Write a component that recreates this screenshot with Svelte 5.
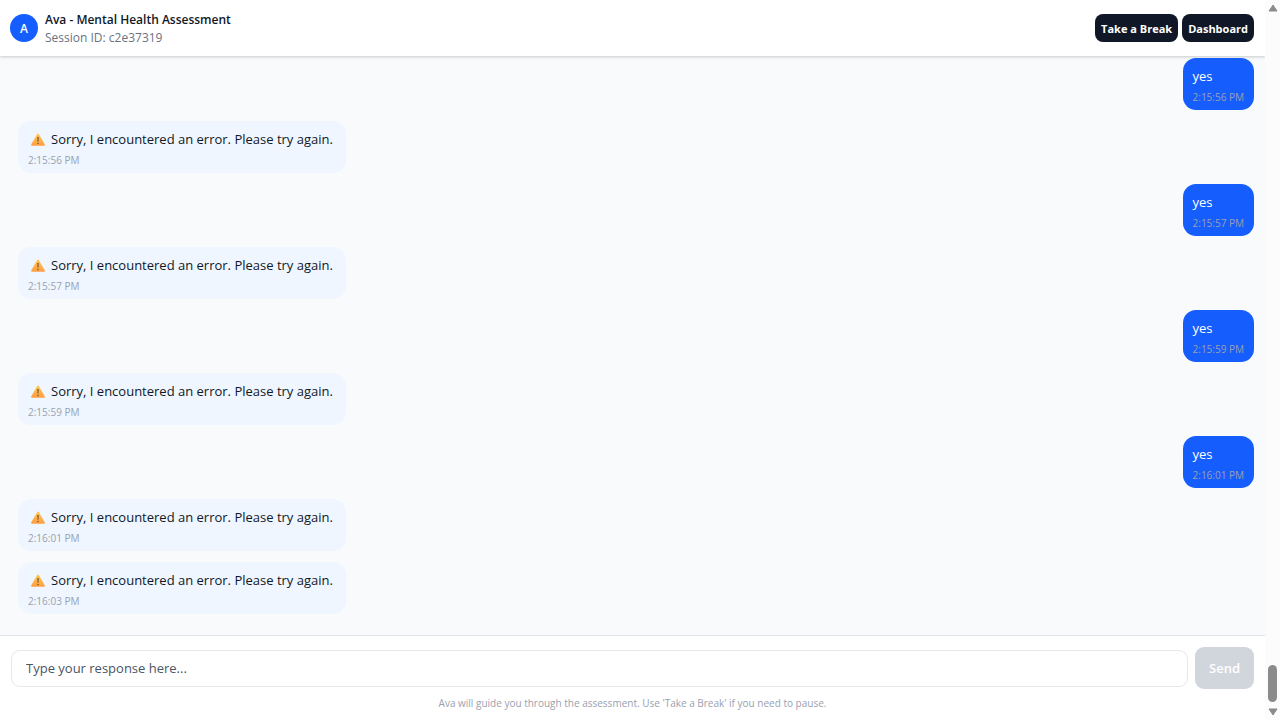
<script>
  const errorText = 'Sorry, I encountered an error. Please try again.';
  const messages = [
    { from: 'user', text: 'yes', time: '2:15:56 PM' },
    { from: 'ava', text: errorText, time: '2:15:56 PM' },
    { from: 'user', text: 'yes', time: '2:15:57 PM' },
    { from: 'ava', text: errorText, time: '2:15:57 PM' },
    { from: 'user', text: 'yes', time: '2:15:59 PM' },
    { from: 'ava', text: errorText, time: '2:15:59 PM' },
    { from: 'user', text: 'yes', time: '2:16:01 PM' },
    { from: 'ava', text: errorText, time: '2:16:01 PM' },
    { from: 'ava', text: errorText, time: '2:16:03 PM' }
  ];
  let draft = $state('');
</script>

<div class="window">
  <div class="page">
    <header>
      <div class="avatar">A</div>
      <div class="title">
        <h1>Ava - Mental Health Assessment</h1>
        <p>Session ID: c2e37319</p>
      </div>
      <div class="actions">
        <button type="button">Take a Break</button>
        <button type="button">Dashboard</button>
      </div>
    </header>

    <main>
      {#each messages as message}
        <div class="bubble {message.from}">
          <p class="text">
            {#if message.from === 'ava'}
              <svg class="warning" viewBox="0 0 14 13" aria-hidden="true">
                <defs>
                  <linearGradient id="amber" x1="0" y1="0" x2="0" y2="1">
                    <stop offset="0" stop-color="#ffc94f" />
                    <stop offset="1" stop-color="#ff9d42" />
                  </linearGradient>
                </defs>
                <path d="M6.2 .9Q7 0 7.8 .9L13.7 11.2Q14.2 12.7 12.8 12.8H1.2Q-.2 12.7 .3 11.2Z" fill="url(#amber)" />
                <path d="M6.4 4H7.6L7.4 8.8H6.6Z" fill="#5a4636" />
                <circle cx="7" cy="10.5" r=".7" fill="#5a4636" />
              </svg>
            {/if}
            <span>{message.text}</span>
          </p>
          <time>{message.time}</time>
        </div>
      {/each}
    </main>

    <footer>
      <form onsubmit={(event) => event.preventDefault()}>
        <input type="text" aria-label="Your response" placeholder="Type your response here..." bind:value={draft} />
        <button type="submit" disabled={!draft.trim()}>Send</button>
      </form>
      <p>Ava will guide you through the assessment. Use 'Take a Break' if you need to pause.</p>
    </footer>
  </div>

  <div class="scrollbar" aria-hidden="true">
    <svg viewBox="0 0 10 8"><path d="M5 1L9 7H1Z" /></svg>
    <div class="thumb"></div>
    <svg viewBox="0 0 10 8"><path d="M5 7L9 1H1Z" /></svg>
  </div>
</div>

<style>
  :global(body) {
    margin: 0;
    background: #fff;
  }

  .window,
  .window * {
    box-sizing: border-box;
  }

  .window {
    display: flex;
    height: 100vh;
    font-family: 'Open Sans', 'Noto Sans', sans-serif;
    color: #101828;
  }

  h1,
  p {
    margin: 0;
  }

  button,
  input {
    font-family: inherit;
  }

  .page {
    display: flex;
    flex: 1;
    flex-direction: column;
    min-width: 0;
    background: #f9fafc;
  }

  header {
    display: flex;
    align-items: center;
    gap: 7px;
    height: 56px;
    padding: 0 11px 0 10px;
    background: #fff;
    box-shadow: 0 1px 3px rgba(0, 0, 0, 0.2);
  }

  .avatar {
    display: grid;
    place-items: center;
    width: 28px;
    height: 28px;
    border-radius: 50%;
    background: #155dfc;
    color: #fff;
    font-size: 12px;
    font-weight: 600;
  }

  .title {
    flex: 1;
    padding-top: 2px;
    line-height: 18px;
  }

  .title h1 {
    font-size: 12px;
    line-height: 18px;
    font-weight: 600;
  }

  .title p {
    font-size: 12px;
    color: #6a7282;
  }

  .actions {
    display: flex;
    gap: 4px;
  }

  .actions button {
    height: 28px;
    padding: 0 6px;
    border: 0;
    border-radius: 8px;
    background: #101828;
    color: #fff;
    font-size: 11px;
    font-weight: 700;
  }

  main {
    display: flex;
    flex: 1;
    flex-direction: column;
    justify-content: flex-end;
    align-items: flex-start;
    gap: 11px;
    min-height: 0;
    padding: 0 11px 21px 18px;
    overflow: hidden;
  }

  .bubble {
    flex: none;
    padding: 7px 13px 5px 10px;
    border-radius: 13px;
    background: #eff6ff;
  }

  .bubble.user {
    align-self: flex-end;
    padding-right: 10px;
    background: #155dfc;
    color: #fff;
  }

  .text {
    display: flex;
    align-items: center;
    gap: 6px;
    margin-bottom: 2px;
    font-size: 13px;
    line-height: 22px;
  }

  .warning {
    width: 14px;
    height: 13px;
    margin-left: 3px;
  }

  time {
    display: block;
    font-size: 10px;
    line-height: 16px;
    color: #99a1af;
  }

  footer {
    padding: 11px 11px 9px;
    border-top: 1px solid #e1e4e9;
    background: #fff;
  }

  form {
    display: flex;
    align-items: center;
    gap: 7px;
  }

  input {
    flex: 1;
    min-width: 0;
    height: 37px;
    padding: 0 14px;
    border: 1px solid #e5e7eb;
    border-radius: 9px;
    background: #fff;
    color: #101828;
    font-size: 13px;
  }

  input::placeholder {
    color: #4a5565;
    opacity: 1;
  }

  form button {
    height: 42px;
    padding: 0 14px;
    border: 0;
    border-radius: 9px;
    background: #155dfc;
    color: #fff;
    font-size: 13px;
    font-weight: 600;
  }

  form button:disabled {
    background: #d1d5dc;
    color: #fff;
  }

  footer p {
    margin-top: 6px;
    font-size: 10px;
    line-height: 16px;
    text-align: center;
    color: #99a1af;
  }

  .scrollbar {
    display: flex;
    flex-direction: column;
    align-items: center;
    width: 15px;
    padding: 4px 0;
    background: #fcfcfc;
  }

  .scrollbar svg {
    width: 10px;
    height: 8px;
    fill: #8b8b8b;
    stroke: #8b8b8b;
    stroke-linejoin: round;
  }

  .thumb {
    width: 9px;
    height: 37px;
    margin: auto 0 6px;
    border-radius: 5px;
    background: #8b8b8b;
  }
</style>
